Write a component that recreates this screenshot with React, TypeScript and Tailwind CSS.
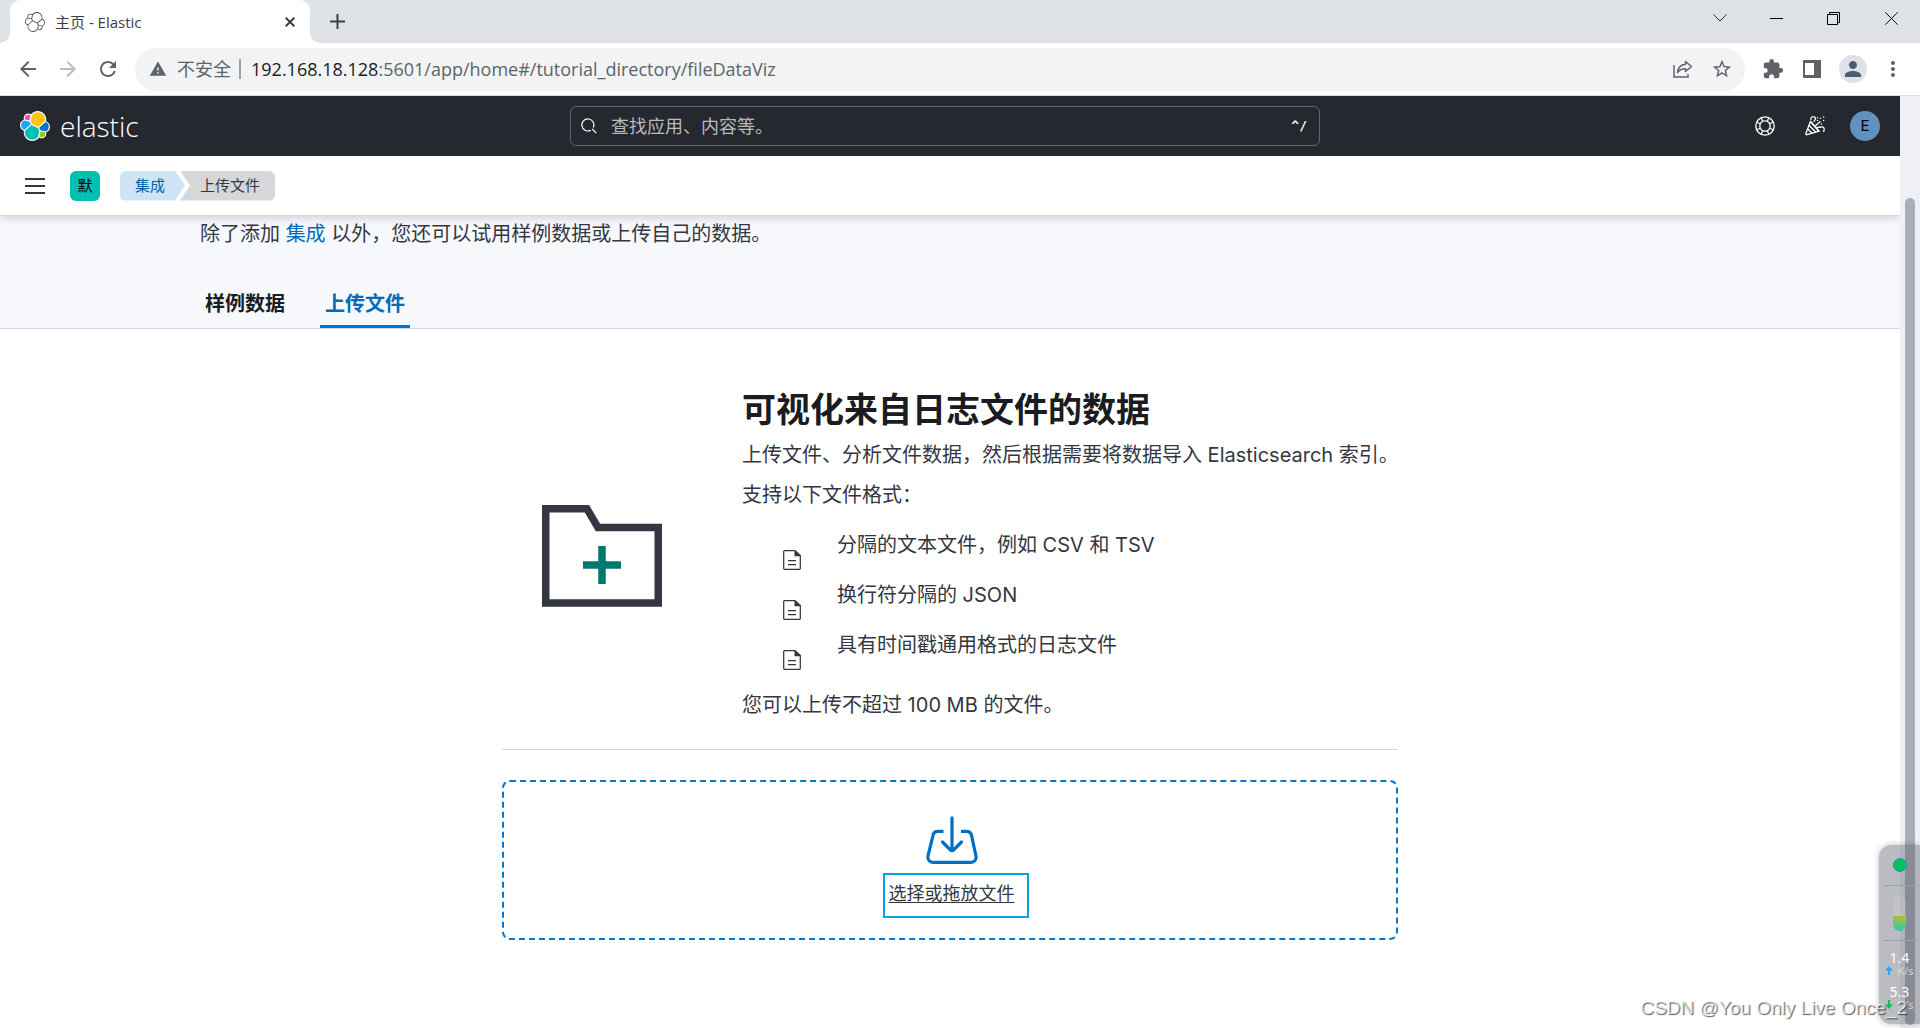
import React from "react";
import {
  MdArrowBack,
  MdArrowForward,
  MdExtension,
  MdMoreVert,
  MdPerson,
  MdRefresh,
  MdStarBorder,
  MdWarning,
} from "react-icons/md";

const logoOutline =
  "M32 16.77c0-2.69-1.664-5.038-4.17-5.957.112-.571.167-1.155.167-1.758C27.997 4.06 23.94 0 18.951 0c-2.917 0-5.65 1.4-7.358 3.766A4.766 4.766 0 008.67 2.768 4.788 4.788 0 003.884 7.55c0 .58.104 1.138.298 1.656A6.366 6.366 0 000 15.18c0 2.701 1.673 5.051 4.188 5.966a9.06 9.06 0 00-.163 1.75c0 4.986 4.054 9.04 9.04 9.04 2.926 0 5.656-1.409 7.353-3.786.841.662 1.874 1.02 2.94 1.02a4.788 4.788 0 004.783-4.783c0-.581-.104-1.138-.297-1.654A6.38 6.38 0 0032 16.77";

const logoCells = [
  {
    fill: "#FEC514",
    d: "M12.58 13.787l7.002 3.211 7.066-6.213a7.849 7.849 0 00.152-1.557c0-4.287-3.477-7.775-7.751-7.775a7.73 7.73 0 00-6.4 3.405L11.465 11z",
  },
  {
    fill: "#00BFB3",
    d: "M5.333 21.215a7.97 7.97 0 00-.153 1.577c0 4.3 3.501 7.799 7.805 7.799a7.81 7.81 0 006.446-3.414l1.166-6.09-1.556-2.985-7.03-3.213z",
  },
  {
    fill: "#F04E98",
    d: "M5.288 9.067l4.8 1.137 1.05-5.471a3.826 3.826 0 00-2.312-.78 3.813 3.813 0 00-3.804 3.813c0 .445.09.884.266 1.3",
  },
  {
    fill: "#1BA9F5",
    d: "M4.872 10.214a5.294 5.294 0 00-3.595 5.02 5.327 5.327 0 003.41 4.958l6.738-6.107-1.238-2.652z",
  },
  {
    fill: "#93C90E",
    d: "M20.873 27.178a3.82 3.82 0 002.301.775 3.813 3.813 0 003.804-3.812c0-.45-.09-.888-.266-1.3l-4.797-1.127z",
  },
  {
    fill: "#0077CC",
    d: "M21.848 20.563l5.28 1.238a5.301 5.301 0 003.595-5.022 5.34 5.34 0 00-3.418-4.96l-6.906 6.066z",
  },
];

function ElasticLogo() {
  return (
    <svg className="size-[30px]" viewBox="0 0 32 32" aria-hidden="true">
      <path fill="#fff" d={logoOutline} />
      {logoCells.map((cell) => (
        <path key={cell.fill} fill={cell.fill} d={cell.d} />
      ))}
    </svg>
  );
}

function Favicon() {
  return (
    <svg className="size-5" viewBox="0 0 32 32" aria-hidden="true">
      <path fill="#4b4d52" d={logoOutline} />
      {logoCells.map((cell) => (
        <path key={cell.fill} fill="#fff" d={cell.d} />
      ))}
    </svg>
  );
}

function TabStrip() {
  return (
    <div className="flex h-[43px] bg-[#dee1e6]">
      <div className="flex w-[10px] shrink-0 flex-col justify-end bg-white">
        <div className="h-full rounded-br-[10px] bg-[#dee1e6]" />
      </div>
      <div className="flex w-[300px] items-center rounded-t-[10px] bg-white pr-3 pl-[15px]">
        <Favicon />
        <span className="ml-[10px] flex-1 font-['Open_Sans','Noto_Sans_CJK_SC',sans-serif] text-[15px] leading-5 text-[#3c4043]">
          主页 - Elastic
        </span>
        <button className="flex size-4 items-center justify-center" aria-label="关闭标签页">
          <svg className="size-[10px]" viewBox="0 0 10 10" stroke="#3c4043" strokeWidth="2">
            <path d="M.7.7l8.6 8.6M9.3.7L.7 9.3" />
          </svg>
        </button>
      </div>
      <div className="w-[10px] shrink-0 bg-white">
        <div className="h-full rounded-bl-[10px] bg-[#dee1e6]" />
      </div>
      <button className="flex w-[34px] items-center justify-center" aria-label="新建标签页">
        <svg className="size-[15px]" viewBox="0 0 15 15" stroke="#3c4043" strokeWidth="2">
          <path d="M7.5 0v15M0 7.5h15" />
        </svg>
      </button>
      <div className="ml-auto flex h-9 items-center text-black">
        <button className="flex w-[57px] justify-center" aria-label="搜索标签页">
          <svg className="h-[8px] w-[14px]" viewBox="0 0 14 8" fill="none" stroke="#222">
            <path d="M.5.5L7 7 13.5.5" />
          </svg>
        </button>
        <button className="flex w-[57px] justify-center" aria-label="最小化">
          <svg className="h-px w-[13px]" viewBox="0 0 13 1">
            <rect width="13" height="1" fill="#000" />
          </svg>
        </button>
        <button className="flex w-[57px] justify-center" aria-label="还原">
          <svg className="size-[13px]" viewBox="0 0 13 13" fill="none" stroke="#000">
            <path d="M.5 2.500h10v10H.5zM2.500 2.500v-2h10v10h-2" />
          </svg>
        </button>
        <button className="flex w-[58px] justify-center" aria-label="关闭">
          <svg className="size-[13px]" viewBox="0 0 13 13" fill="none" stroke="#111">
            <path d="M.3.3l12.400 12.400M12.700.3L.3 12.700" />
          </svg>
        </button>
      </div>
    </div>
  );
}

function Toolbar() {
  return (
    <div className="flex h-[53px] items-center border-b border-[#dadce0] bg-white">
      <div className="flex w-[135px] shrink-0 items-center gap-4 pl-4 text-[#5f6368]">
        <button aria-label="后退">
          <MdArrowBack className="size-6" />
        </button>
        <button aria-label="前进" className="text-[#babcbe]">
          <MdArrowForward className="size-6" />
        </button>
        <button aria-label="重新加载">
          <MdRefresh className="size-6" />
        </button>
      </div>
      <div className="flex h-[43px] min-w-0 flex-1 items-center rounded-full bg-[#f1f3f4] pr-3 pl-[14px] font-['Open_Sans','Noto_Sans_CJK_SC',sans-serif] text-lg text-[#5f6368]">
        <MdWarning className="size-[18px] shrink-0" />
        <span className="ml-[10px] leading-6 whitespace-nowrap">不安全</span>
        <span className="mr-[10px] ml-2 h-5 w-[2px] bg-[#9aa0a6]" />
        <input
          aria-label="地址"
          className="sr-only"
          defaultValue="192.168.18.128:5601/app/home#/tutorial_directory/fileDataViz"
        />
        <span className="flex-1 truncate leading-7">
          <span className="text-[#202124]">192.168.18.128</span>
          :5601/app/home#/tutorial_directory/fileDataViz
        </span>
        <button className="mr-[18px]" aria-label="分享">
          <svg className="h-[18px] w-5" viewBox="0 0 20 18" fill="none" stroke="#5f6368" strokeWidth="1.5">
            <path d="M1 5v12h14v-3" />
            <path d="M12.500 1.500L18.500 6.500l-6 5V8.800C8.500 8.800 6.500 10 4.500 12.500 5 8.500 7.500 4.800 12.500 4.300z" strokeLinejoin="round" />
          </svg>
        </button>
        <button aria-label="收藏">
          <MdStarBorder className="size-[22px]" />
        </button>
      </div>
      <div className="flex w-[175px] shrink-0 items-center pl-[17px] text-[#5f6368]">
        <button aria-label="扩展程序">
          <MdExtension className="size-[22px]" />
        </button>
        <button className="ml-[19px]" aria-label="侧边栏">
          <svg className="size-[18px]" viewBox="0 0 18 18">
            <path fill="#5f6368" fillRule="evenodd" d="M0 0h18v18H0zM2 3h9v12H2z" />
          </svg>
        </button>
        <button
          className="ml-[18px] flex size-7 items-center justify-center rounded-full bg-[#dee1e6] text-[#4b5b75]"
          aria-label="用户"
        >
          <MdPerson className="size-6" />
        </button>
        <button className="ml-[14px]" aria-label="更多">
          <MdMoreVert className="size-6" />
        </button>
      </div>
    </div>
  );
}

function HelpIcon() {
  return (
    <svg className="size-5" viewBox="0 0 20 20" fill="none" stroke="#fff" strokeWidth="1.3">
      <circle cx="10" cy="10" r="9.200" />
      <circle cx="10" cy="10" r="5.200" />
      <path
        strokeWidth="1.200"
        d="M6.200 1.800l1.500 3.400M1.800 6.200l3.400 1.500M13.800 1.800l-1.500 3.400M18.200 6.200l-3.400 1.500M6.200 18.200l1.500-3.400M1.800 13.800l3.400-1.500M13.800 18.200l-1.500-3.400M18.200 13.800l-3.400-1.500"
      />
    </svg>
  );
}

function CheerIcon() {
  return (
    <svg
      className="size-5"
      viewBox="0 0 20 20"
      fill="none"
      stroke="#fff"
      strokeWidth="1.300"
      strokeLinecap="round"
      strokeLinejoin="round"
    >
      <path d="M5.500 5.500L.900 17.300c-.3.900.3 1.600 1.200 1.400L14 15.200z" />
      <path d="M4.200 9.500l6.500 6.500M2.800 13l4 4M5.500 5.500l8.500 9.700" />
      <path d="M6 3.500C5.500 1 8 .2 9.500 1c2 1.200.3 3.200-.5 4.500M10.800 9.500L15 5.700" />
      <path d="M12 11.500l4.200-.500M16.200 11c2.500-.8 3.600 1.200 2.500 4.500" />
      <path d="M12.500 1.700v.1M12.500 4.500v.1M15.500 2.200v.1M18.700 1v.1M18.600 4.500v.1M16.500 8v.1" strokeWidth="1.500" />
    </svg>
  );
}

function AppHeader() {
  return (
    <header className="grid h-[60px] shrink-0 grid-cols-[550fr_750px_560fr] items-center bg-[#25282f] px-5 font-['Inter','Noto_Sans_CJK_SC',sans-serif]">
      <a href="#home" className="flex items-center gap-[10px] text-white" aria-label="elastic">
        <ElasticLogo />
        <span className="font-['Open_Sans',sans-serif] text-[28px] leading-8 font-light">elastic</span>
      </a>
      <div className="flex h-10 items-center rounded-md border border-[#63656a] pr-3 pl-[10px]">
        <svg className="size-4" viewBox="0 0 16 16" fill="none" stroke="#fff" strokeWidth="1.200">
          <path d="M9.800 12.200A6 6 0 1 1 12.300 9.500M11.200 10.800l4 4.400" />
        </svg>
        <input
          aria-label="搜索"
          placeholder="查找应用、内容等。"
          className="ml-[14px] min-w-0 flex-1 bg-transparent pt-[2px] text-lg leading-6 text-white outline-none placeholder:text-[#b9babd]"
        />
        <span className="font-['DejaVu_Sans_Mono',monospace] text-[13px] leading-5 font-bold text-white">^/</span>
      </div>
      <div className="flex items-center justify-end">
        <button aria-label="帮助">
          <HelpIcon />
        </button>
        <button className="ml-[30px]" aria-label="新增功能">
          <CheerIcon />
        </button>
        <button
          className="ml-[25px] size-[30px] rounded-full bg-[#6092c0] text-[15px] leading-[30px] text-black"
          aria-label="帐户"
        >
          E
        </button>
      </div>
    </header>
  );
}

function Breadcrumbs() {
  return (
    <div className="relative z-10 flex h-[60px] shrink-0 items-center border-b border-[#d3dae6] bg-white pl-[25px] text-[15px] leading-[30px] shadow-[0_2px_8px_rgba(60,66,87,0.22)]">
      <button aria-label="菜单">
        <svg className="h-4 w-5" viewBox="0 0 20 16" fill="#343741">
          <path d="M0 0h20v2H0zM0 7h20v2H0zM0 14h20v2H0z" />
        </svg>
      </button>
      <button className="ml-[25px] size-[30px] rounded-md bg-[#00bfb3] text-black">默</button>
      <nav className="ml-5 flex" aria-label="路径">
        <a
          href="#integrations"
          className="h-[30px] w-[65px] rounded-l-md bg-[#cce4f5] pl-[15px] text-[#0061a6] [clip-path:polygon(0_0,55px_0,65px_50%,55px_100%,0_100%)]"
        >
          集成
        </a>
        <span className="-ml-[5px] h-[30px] rounded-r-md bg-[#d6d7d9] pr-[15px] pl-5 text-[#343741] [clip-path:polygon(0_0,100%_0,100%_100%,0_100%,10px_50%)]">
          上传文件
        </span>
      </nav>
    </div>
  );
}

function DocumentIcon() {
  return (
    <svg className="h-5 w-[18px] shrink-0" viewBox="0 0 18 20" fill="none" stroke="#343741">
      <path strokeWidth="1.250" d="M12 .7H1.500a.8.8 0 0 0-.8.8v17a.8.8 0 0 0 .8.8h15a.8.8 0 0 0 .8-.8V5.500z" />
      <path fill="#343741" stroke="none" d="M11.500 0v6.200H18z" />
      <path d="M5 10.500h8M5 14.500h8" strokeWidth="1.250" />
    </svg>
  );
}

function FolderIcon() {
  return (
    <svg className="h-[102px] w-[120px]" viewBox="0 0 120 102" fill="none" strokeWidth="7.500">
      <path stroke="#343741" d="M3.750 3.750h41.200l11 18.750h60.300v75.500H3.750z" />
      <path stroke="#007871" d="M60 41v38M41 60h38" />
    </svg>
  );
}

function ImportIcon() {
  return (
    <svg
      className="h-12 w-[52px]"
      viewBox="0 0 52 48"
      fill="none"
      stroke="#0071c2"
      strokeWidth="3.200"
      strokeLinecap="round"
      strokeLinejoin="round"
    >
      <path strokeLinecap="butt" d="M17.500 15.300h-5.500c-2.600 0-4.600 1.600-5 4L2 40c-.7 3.600 1.600 6.300 5 6.300h38c3.400 0 5.700-2.700 5-6.300l-4.500-20.700c-.5-2.400-2.400-4-5-4h-5.500" />
      <path d="M26 1.800v33M16.500 26l8 8q1.500 1.300 3 0l8-8" />
    </svg>
  );
}

const formats = ["分隔的文本文件，例如 CSV 和 TSV", "换行符分隔的 JSON", "具有时间戳通用格式的日志文件"];

function PageContent() {
  return (
    <main className="flex-1 text-xl leading-[30px] text-[#343741]">
      <section className="border-b border-[#d3dae6] bg-[#f7f8fc]">
        <div className="mx-auto max-w-[1500px]">
          <p className="pt-[3px]">
            除了添加{" "}
            <a href="#integrations" className="text-[#006bb8]">
              集成
            </a>{" "}
            以外，您还可以试用样例数据或上传自己的数据。
          </p>
          <div className="mt-[30px] flex gap-[30px] font-bold" role="tablist">
            <button role="tab" aria-selected="false" className="h-[49px] px-[5px] text-[#1a1c21]">
              样例数据
            </button>
            <button
              role="tab"
              aria-selected="true"
              className="h-[49px] px-[5px] text-[#006bb8] shadow-[inset_0_-3px_0_#0077cc]"
            >
              上传文件
            </button>
          </div>
        </div>
      </section>
      <section className="mx-auto w-full max-w-[896px] pt-[61px]">
        <div className="flex items-center gap-10">
          <div className="flex w-[200px] shrink-0 justify-center pt-[2px]">
            <FolderIcon />
          </div>
          <div className="flex-1">
            <h1 className="text-[34px] leading-10 font-bold text-[#1a1c21]">可视化来自日志文件的数据</h1>
            <p className="mt-[10px] whitespace-nowrap">上传文件、分析文件数据，然后根据需要将数据导入 Elasticsearch 索引。</p>
            <p className="mt-[10px]">支持以下文件格式：</p>
            <ul className="mt-5 flex flex-col pl-[41px]">
              {formats.map((format) => (
                <li key={format} className="flex h-[50px] gap-9">
                  <span className="pt-5">
                    <DocumentIcon />
                  </span>
                  <span>{format}</span>
                </li>
              ))}
            </ul>
            <p className="mt-[10px]">您可以上传不超过 100 MB 的文件。</p>
          </div>
        </div>
        <hr className="mt-[29px] border-[#d3dae6]" />
        <label className="mt-[30px] flex h-40 cursor-pointer flex-col items-center rounded-lg border-2 border-dashed border-[#0077cc] pt-[34px] pl-[3px]">
          <input type="file" className="sr-only" />
          <ImportIcon />
          <span className="relative mt-[17px] text-lg leading-[26px]">
            <span className="underline underline-offset-2">选择或拖放文件</span>
            <span className="absolute -top-2 -right-[14px] -bottom-[11px] -left-[6px] border-2 border-[#00a2e8]" />
          </span>
        </label>
      </section>
    </main>
  );
}

function SpeedRow({ value, up }: { value: string; up: boolean }) {
  return (
    <div className="text-center text-white">
      <div className="text-sm leading-[14px]">{value}</div>
      <div className="flex items-center justify-center gap-1 text-[11px] leading-[11px] text-[#d5d6da]">
        <svg className="h-[9px] w-2" viewBox="0 0 8 9" fill={up ? "#16b0ff" : "#0bbf62"}>
          <path d={up ? "M4 0l4 4.500H5V9H3V4.500H0z" : "M4 9L0 4.500h3V0h2v4.500h3z"} />
        </svg>
        K/s
      </div>
    </div>
  );
}

function SpeedWidget() {
  return (
    <aside className="absolute right-0 bottom-1 z-20 flex h-[179px] w-[41px] flex-col rounded-l-xl bg-[#55586466] font-['Noto_Sans',sans-serif] shadow-[0_0_6px_rgba(0,0,0,0.25)]">
      <div className="mx-1 flex h-[41px] items-center justify-center border-b border-[#9aa5ab]">
        <div className="size-[14px] rounded-full border border-[#2f8ccf] bg-[#00c160]" />
      </div>
      <div className="mx-1 flex h-[55px] items-center justify-center border-b border-[#9aa5ab]">
        <div className="flex h-9 w-[13px] items-end overflow-hidden rounded-full bg-[#ffffff1c]">
          <div className="h-[15px] w-full bg-linear-to-b from-[#b3bb35] via-[#63c76b] to-[#36bfc0]" />
        </div>
      </div>
      <div className="flex flex-col gap-[9px] pt-[10px]">
        <SpeedRow value="1.4" up />
        <SpeedRow value="5.3" up={false} />
      </div>
    </aside>
  );
}

export default function App() {
  return (
    <div className="relative flex h-screen flex-col overflow-hidden bg-white font-['Inter','Noto_Sans_CJK_SC',sans-serif]">
      <TabStrip />
      <Toolbar />
      <div className="flex min-h-0 flex-1">
        <div className="flex min-w-0 flex-1 flex-col overflow-hidden">
          <AppHeader />
          <Breadcrumbs />
          <PageContent />
        </div>
        <div className="w-5 shrink-0 bg-[#eff0f5] px-[5px] pt-[102px] pb-[3px]">
          <div className="h-full rounded-full bg-[#abadb8]" />
        </div>
      </div>
      <SpeedWidget />
      <div className="absolute right-[13px] bottom-2 z-30 font-['Liberation_Sans',sans-serif] text-[19px] leading-6 text-[#ffffffb0] [text-shadow:1px_1px_1px_rgba(0,0,0,0.65)]">
        CSDN @You Only Live Once_2
      </div>
    </div>
  );
}
